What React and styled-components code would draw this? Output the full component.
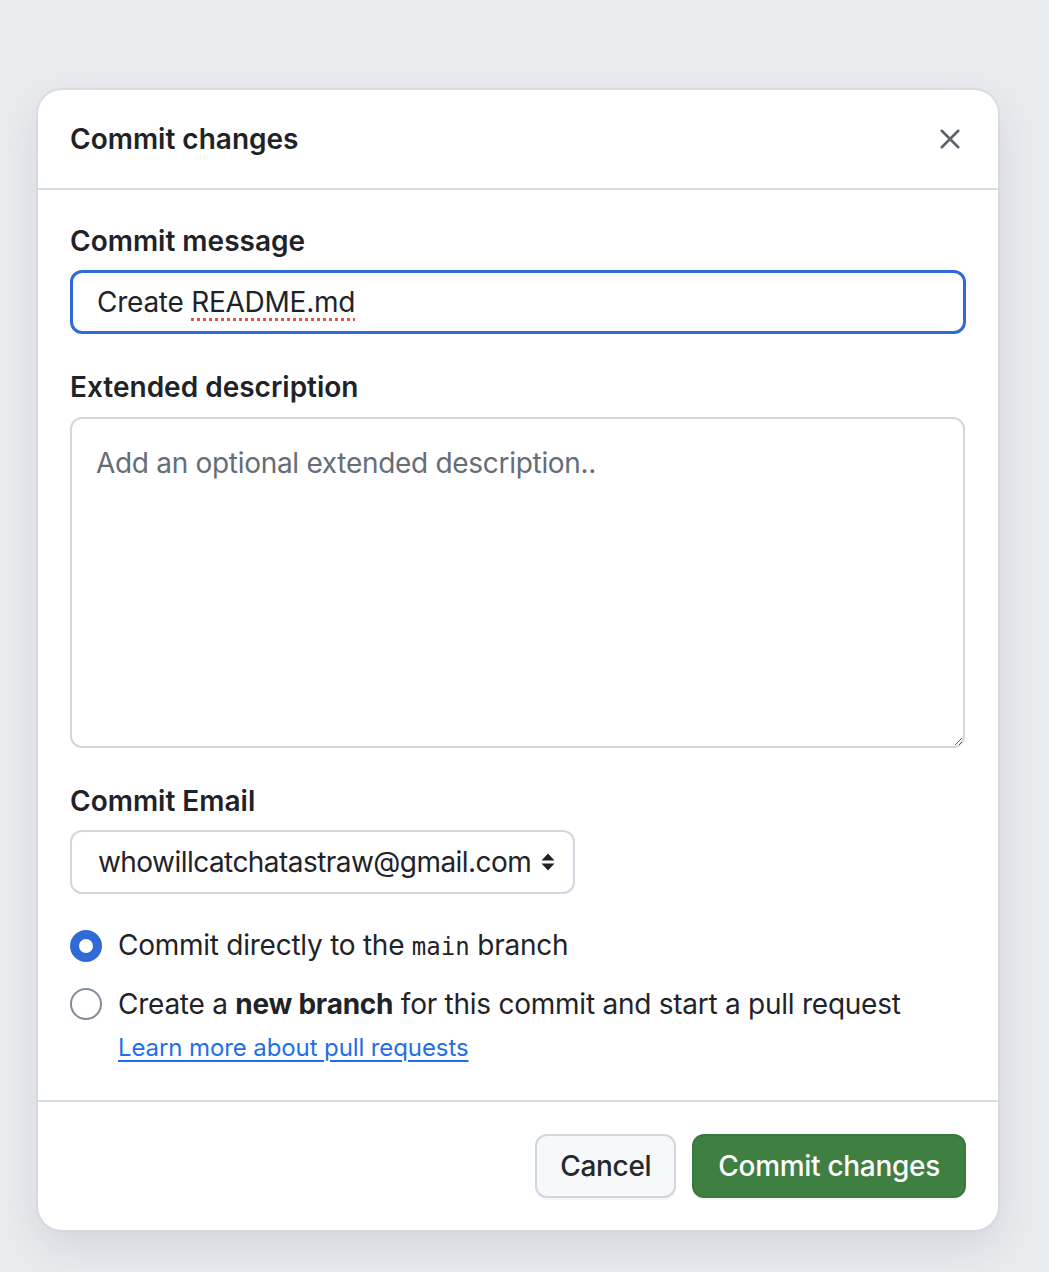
import styled, { createGlobalStyle } from 'styled-components';

// backdrop + base font
const GlobalStyle = createGlobalStyle`
  html, body {
    margin: 0;
    padding: 0;
    background: #eaebef;
    font-family: Inter, "Noto Sans", "Liberation Sans", sans-serif;
    color: #1f2328;
  }
`;

const Page = styled.div`
  min-height: 1272px;
  padding: 90px 51px 0 38px;
  box-sizing: border-box;
`;

const Dialog = styled.div`
  width: 960px;
  background: #ffffff;
  border-radius: 24px;
  box-shadow: 0 0 0 2px rgba(208, 215, 222, 0.6), 0 16px 40px rgba(140, 149, 159, 0.25);
  overflow: hidden;
`;

const Header = styled.div`
  height: 98px;
  display: flex;
  align-items: center;
  justify-content: space-between;
  padding: 0 32px;
  border-bottom: 2px solid #d8dee4;
`;

const Title = styled.h1`
  margin: 0;
  font-size: 28px;
  font-weight: 600;
`;

const CloseButton = styled.button`
  width: 48px;
  height: 48px;
  margin-right: -8px;
  border: none;
  background: transparent;
  display: flex;
  align-items: center;
  justify-content: center;
  color: #59636e;
  padding: 0;
`;

const Body = styled.div`
  padding: 33px 32px 34px;
  display: flex;
  flex-direction: column;
  letter-spacing: -0.25px;
`;

const Label = styled.label`
  font-size: 28px;
  font-weight: 600;
  line-height: 36px;
  letter-spacing: 0;
  margin-bottom: ${(p) => p.$gap || 12}px;
`;

// the commit message field, shown focused
const MessageField = styled.div`
  box-sizing: border-box;
  width: 896px;
  height: 64px;
  border: 3px solid #2f6ad6;
  border-radius: 12px;
  padding: 0 24px;
  display: flex;
  align-items: center;
  font-size: 28px;
  color: #1f2328;
  margin-bottom: 35px;
`;

const Misspelled = styled.span`
  text-decoration: underline dotted #e5534b;
  text-decoration-thickness: 3px;
  text-underline-offset: 6px;
`;

const TextArea = styled.textarea`
  box-sizing: border-box;
  width: 895px;
  height: 331px;
  border: 2px solid #d0d7de;
  border-radius: 12px;
  padding: 26px 24px;
  font-family: inherit;
  font-size: 28px;
  line-height: 36px;
  letter-spacing: -0.3px;
  color: #1f2328;
  resize: vertical;
  outline: none;
  margin-bottom: 35px;

  &::placeholder {
    color: #656d76;
  }
`;

const SelectBox = styled.div`
  box-sizing: border-box;
  width: 505px;
  height: 64px;
  border: 2px solid #d0d7de;
  border-radius: 12px;
  padding: 0 17px 0 26px;
  display: flex;
  align-items: center;
  justify-content: space-between;
  gap: 8px;
  font-size: 28px;
  letter-spacing: -0.55px;
  margin-bottom: 34px;

  svg {
    flex-shrink: 0;
  }
`;

const RadioRow = styled.label`
  display: flex;
  align-items: center;
  gap: 16px;
  font-size: 28px;
  line-height: 36px;
  height: 36px;
  margin-bottom: ${(p) => p.$gap || 0}px;
`;

const Radio = styled.span`
  box-sizing: border-box;
  width: 32px;
  height: 32px;
  border-radius: 50%;
  flex-shrink: 0;
  background: #ffffff;
  border: ${(p) => (p.$checked ? '9px solid #2f6ad6' : '2px solid #818b98')};
`;

const Mono = styled.code`
  font-family: "DejaVu Sans Mono", "Liberation Mono", monospace;
  font-size: 24px;
  letter-spacing: 0;
`;

const Link = styled.a`
  margin-left: 48px;
  margin-top: 8px;
  font-size: 24px;
  line-height: 36px;
  letter-spacing: -0.1px;
  color: #1f6feb;
  text-decoration: underline;
  text-underline-offset: 4px;
  align-self: flex-start;
`;

const Footer = styled.div`
  border-top: 2px solid #d8dee4;
  padding: 32px;
  display: flex;
  justify-content: flex-end;
  gap: 16px;
`;

const Button = styled.button`
  height: 64px;
  padding: 0 ${(p) => (p.$primary ? 24 : 23)}px;
  border-radius: 12px;
  font-family: inherit;
  font-size: 28px;
  font-weight: 500;
  letter-spacing: -0.3px;
  border: 2px solid ${(p) => (p.$primary ? '#387a3b' : '#d0d7de')};
  background: ${(p) => (p.$primary ? '#3f7f42' : '#f6f8fa')};
  color: ${(p) => (p.$primary ? '#ffffff' : '#25292e')};
  box-shadow: 0 2px 0 rgba(31, 35, 40, 0.04);
`;

const CloseIcon = () => (
  <svg width="22" height="22" viewBox="0 0 24 24" fill="none" stroke="currentColor" strokeWidth="2.8" strokeLinecap="round">
    <path d="M3 3l18 18M21 3L3 21" />
  </svg>
);

const SortIcon = () => (
  <svg width="16" height="20" viewBox="0 0 16 20" fill="#1f2328">
    <path d="M8 1.5l6.5 7h-13z" />
    <path d="M8 18.5l6.5-7h-13z" />
  </svg>
);

export default function App() {
  return (
    <>
      <GlobalStyle />
      <Page>
        <Dialog>
          <Header>
            <Title>Commit changes</Title>
            <CloseButton aria-label="Close">
              <CloseIcon />
            </CloseButton>
          </Header>
          <Body>
            <Label $gap={11}>Commit message</Label>
            <MessageField>
              Create&nbsp;<Misspelled>README.md</Misspelled>
            </MessageField>
            <Label $gap={12}>Extended description</Label>
            <TextArea placeholder="Add an optional extended description.." />
            <Label $gap={11}>Commit Email</Label>
            <SelectBox>
              <span>whowillcatchatastraw@gmail.com</span>
              <SortIcon />
            </SelectBox>
            <RadioRow $gap={22}>
              <Radio $checked />
              <span>
                Commit directly to the <Mono>main</Mono> branch
              </span>
            </RadioRow>
            <RadioRow>
              <Radio />
              <span>
                Create a <b>new branch</b> for this commit and start a pull request
              </span>
            </RadioRow>
            <Link href="#">Learn more about pull requests</Link>
          </Body>
          <Footer>
            <Button>Cancel</Button>
            <Button $primary>Commit changes</Button>
          </Footer>
        </Dialog>
      </Page>
    </>
  );
}
